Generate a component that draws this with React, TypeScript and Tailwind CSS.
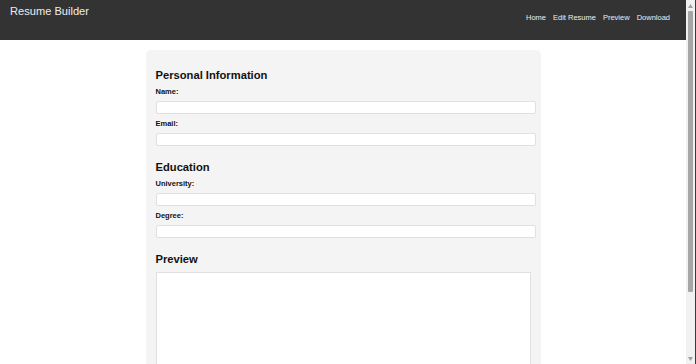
import React from "react";

function Field({ label }: { label: string }) {
  return (
    <div>
      <label className="block mt-[5px] text-[7.5px] leading-[9px] font-bold text-[#111]">{label}</label>
      <input
        type="text"
        className="block mt-[5px] w-[380px] h-[13px] bg-white border border-[#e0e0e0] rounded-[2px] outline-none"
      />
    </div>
  );
}

function Scrollbar() {
  return (
    <div className="w-[10px] h-[364px] shrink-0 flex flex-col items-center bg-[#f1f1f1] border-r border-[#3a3a3a]">
      <div className="h-[11px] flex items-center justify-center">
        <svg width="5" height="4" viewBox="0 0 5 4">
          <polygon points="2.5,0 5,4 0,4" fill="#a0a0a0" />
        </svg>
      </div>
      <div className="w-[5px] h-[281px] bg-[#a6a6a6] rounded-[1px]" />
      <div className="flex-1" />
      <div className="h-[11px] flex items-center justify-center">
        <svg width="5" height="4" viewBox="0 0 5 4">
          <polygon points="0,0 5,0 2.5,4" fill="#a0a0a0" />
        </svg>
      </div>
    </div>
  );
}

export default function App() {
  return (
    <div
      className="h-[364px] flex overflow-hidden bg-white"
      style={{ fontFamily: '"Liberation Sans", Arial, sans-serif' }}
    >
      <div className="flex-1 min-w-0 h-[364px] overflow-hidden">
        <header className="h-[40px] bg-[#333333] px-[10px] flex justify-between items-start">
          <div className="mt-[5px] text-[11.1px] leading-[13px] text-[#eeeeee]">Resume Builder</div>
          <nav className="mt-[13px] mr-[6px] flex gap-[7px] text-[7.5px] leading-[9px] text-[#eeeeee]">
            <a>Home</a>
            <a>Edit Resume</a>
            <a>Preview</a>
            <a>Download</a>
          </nav>
        </header>
        <main className="mt-[10px] mx-auto w-[395px] bg-[#f4f4f4] rounded-[5px] px-[10px] pt-[10px] pb-[10px]">
          <h2 className="mt-[9px] text-[11.2px] leading-[13px] font-bold text-[#111]">Personal Information</h2>
          <Field label="Name:" />
          <Field label="Email:" />
          <h2 className="mt-[15px] text-[11.2px] leading-[13px] font-bold text-[#111]">Education</h2>
          <Field label="University:" />
          <Field label="Degree:" />
          <h2 className="mt-[15px] text-[11.2px] leading-[13px] font-bold text-[#111]">Preview</h2>
          <div className="mt-[6px] w-[375px] h-[150px] bg-white border border-[#e0e0e0]" />
        </main>
      </div>
      <Scrollbar />
    </div>
  );
}
